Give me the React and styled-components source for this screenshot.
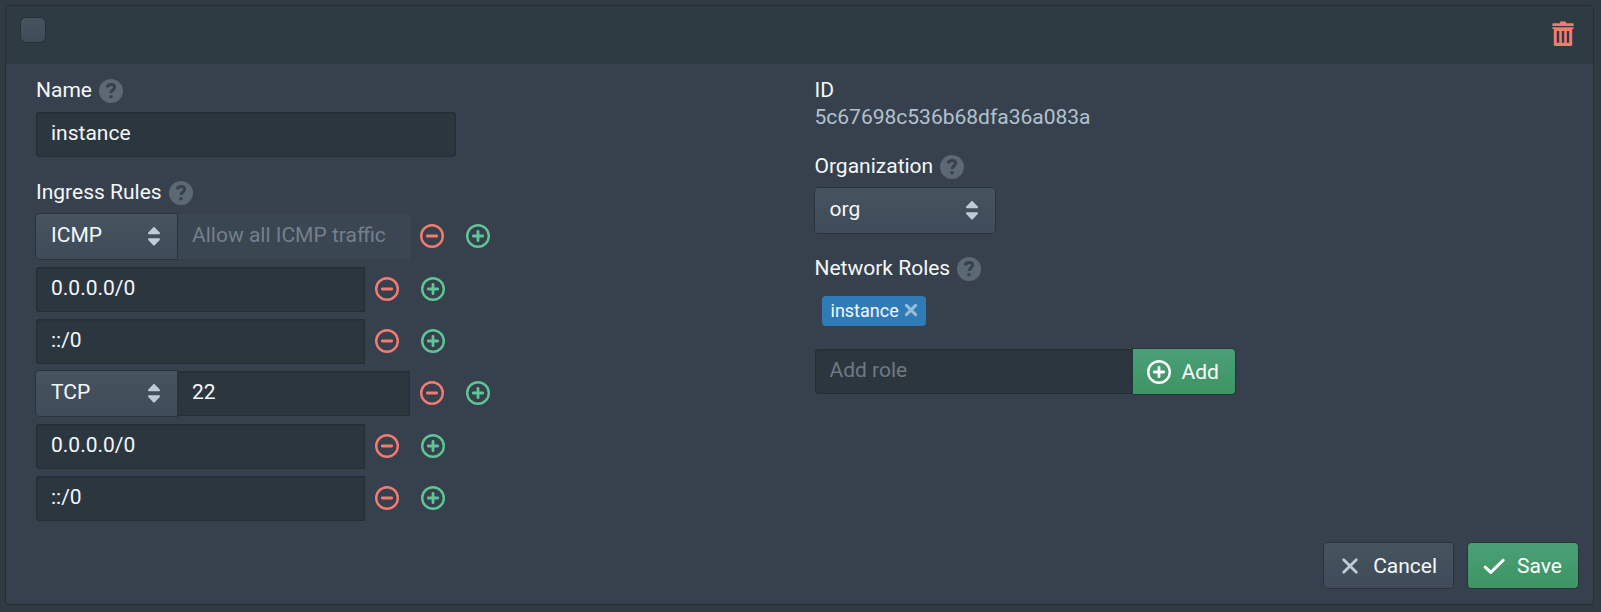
import React, { useState } from "react";
import styled, { createGlobalStyle, css } from "styled-components";

const GlobalStyle = createGlobalStyle`
  * {
    box-sizing: border-box;
  }

  body {
    margin: 0;
    padding: 6px 8px 6px 6px;
    background: #303a43;
    color: #f5f8fa;
    font-family: Roboto, "Noto Sans", sans-serif;
    font-size: 21px;
    line-height: 27px;
  }

  button,
  input,
  select {
    margin: 0;
    font-family: inherit;
    font-size: inherit;
  }
`;

const Card = styled.form`
  border-radius: 4px;
  background: #36414d;
  box-shadow: 0 0 0 1px #262f36, 0 1px 1px #262f36;
  overflow: hidden;
`;

const CardHeader = styled.header`
  display: flex;
  justify-content: space-between;
  align-items: flex-start;
  height: 58px;
  padding: 12px 15px;
  background: #2f3b43;
`;

const Checkbox = styled.input`
  appearance: none;
  width: 24px;
  height: 24px;
  border-radius: 5px;
  background: linear-gradient(#46545e, #3f4b59);
  box-shadow: 0 0 0 1px #263138;
  cursor: pointer;

  &:checked {
    background: #137cbd;
  }
`;

const IconButton = styled.button`
  display: flex;
  justify-content: center;
  align-items: center;
  width: ${({ $width }) => $width || "44px"};
  height: ${({ $height }) => $height || "43px"};
  padding: 0;
  border: none;
  background: transparent;
  color: ${({ $color }) => $color};
  cursor: pointer;
`;

const CardBody = styled.div`
  display: grid;
  grid-template-columns: 1fr 1fr;
  padding: 13px 15px 0;
`;

const Column = styled.div`
  padding: 0 15px;
`;

const Field = styled.div`
  margin-bottom: 22px;
`;

const LabelRow = styled.div`
  display: flex;
  align-items: center;
  gap: 7px;
  margin-bottom: 8px;
`;

const HelpButton = styled.button`
  display: flex;
  padding: 0;
  border: none;
  background: transparent;
  color: #5c6873;
  cursor: help;
`;

const Value = styled.div`
  color: #b5c1ce;
`;

const TextInput = styled.input`
  width: ${({ $width }) => $width};
  height: 45px;
  padding: 0 14px 3px 15px;
  border: none;
  outline: none;
  border-radius: ${({ $radius }) => $radius || "4px"};
  background: #2c363f;
  box-shadow: inset 0 0 0 1px #252e35, inset 0 1px 2px #222b31;
  color: #f5f8fa;

  &::placeholder {
    color: #6d7983;
    opacity: 1;
  }

  &:disabled {
    background: #3a4651;
    box-shadow: none;
  }

  &:disabled::placeholder {
    color: #74808b;
  }
`;

const raised = css`
  background: linear-gradient(#46545e, #3f4b59);
  box-shadow: 0 0 0 1px #29333b;
`;

const SelectWrap = styled.div`
  position: relative;
  width: ${({ $width }) => $width};

  svg {
    position: absolute;
    top: 11px;
    right: 11px;
    pointer-events: none;
  }
`;

const Select = styled.select`
  ${raised}
  appearance: none;
  display: block;
  width: 100%;
  height: 45px;
  padding: 0 38px 3px 15px;
  border: none;
  border-radius: ${({ $radius }) => $radius || "4px"};
  color: #f5f8fa;
  cursor: pointer;
`;

const RuleRow = styled.div`
  display: flex;
  margin-bottom: 8px;
`;

const AddressRow = styled.div`
  display: flex;
  margin-bottom: 7px;
`;

const RowActions = styled.div`
  display: flex;
  gap: 2px;
`;

const Tags = styled.div`
  display: flex;
  padding: 6px 7px 1px;
`;

const Tag = styled.span`
  display: inline-flex;
  align-items: center;
  gap: 5px;
  height: 30px;
  padding: 0 8px 2px 9px;
  border-radius: 4px;
  background: #2f7bb8;
  font-size: 18px;
`;

const InputGroup = styled.div`
  display: flex;
`;

const Button = styled.button`
  ${raised}
  display: inline-flex;
  align-items: center;
  gap: 11px;
  height: 45px;
  padding: 0 16px 0 14px;
  border: none;
  border-radius: ${({ $radius }) => $radius || "4px"};
  color: #f5f8fa;
  cursor: pointer;

  svg {
    color: #bfccd6;
  }

  ${({ $success }) =>
    $success &&
    css`
      background: linear-gradient(#4a9f77, #3f9463);
      color: #ffffff;

      svg {
        color: #ffffff;
      }
    `}
`;

const CardFooter = styled.footer`
  display: flex;
  justify-content: flex-end;
  gap: 15px;
  padding: 15px 15px 16px;
`;

const CircleIcon = ({ plus }) => (
  <svg width="24" height="24" viewBox="0 0 24 24" fill="none" stroke="currentColor" aria-hidden="true">
    <circle cx="12" cy="12" r="10.8" strokeWidth="2.4" />
    <path d={plus ? "M7.3 12h9.4M12 7.3v9.4" : "M7.3 12h9.4"} strokeWidth="2.8" strokeLinecap="round" />
  </svg>
);

const HelpIcon = () => (
  <svg width="24" height="24" viewBox="0 0 24 24" fill="none" aria-hidden="true">
    <circle cx="12" cy="12" r="12" fill="currentColor" />
    <path
      d="M8.2 8.4C8.6 6.3 10 5.4 12.1 5.4c2.200 0 3.500 1.100 3.500 2.800 0 2.700-3.500 2.900-3.500 5.700"
      stroke="#36414d"
      strokeWidth="3"
    />
    <rect x="10.4" y="16.2" width="3.2" height="3" rx="0.6" fill="#36414d" />
  </svg>
);

const TrashIcon = () => (
  <svg width="22" height="26" viewBox="0 0 22 26" aria-hidden="true">
    <path
      fill="currentColor"
      d="M8 2.2V1.5C8 .8 8.5.5 9 .5h4c.5 0 1 .3 1 1v.7h7c.4 0 .6.2.6.6v2.3H.4V2.8c0-.4.2-.6.6-.6z"
    />
    <path
      fill="currentColor"
      fillRule="evenodd"
      d="M.4 6.3h21.2v1.800H20.2v15.500c0 .9-.5 1.400-1.300 1.400H3.100c-.8 0-1.300-.5-1.300-1.400V8.100H.4zM4.800 10v11.800h2.400V10zM9.800 10v11.800h2.400V10zM14.800 10v11.800h2.400V10z"
    />
  </svg>
);

const DoubleCaret = () => (
  <svg width="24" height="22" viewBox="0 0 24 22" fill="#bfccd6" aria-hidden="true">
    <path d="M12 2c.3 0 .6.1.8.4l4.900 5.200c.7.8.300 1.700-.7 1.700H7c-1 0-1.400-.9-.7-1.700l4.900-5.200c.2-.3.500-.4.800-.4z" />
    <path d="M12 20.600c.3 0 .6-.1.8-.4l4.900-5.200c.7-.8.300-1.700-.7-1.700H7c-1 0-1.400.9-.7 1.700l4.900 5.200c.2.3.500.4.800.4z" />
  </svg>
);

const CrossIcon = ({ size = 24, width = 2.8, inset = 5.7 }) => (
  <svg width={size} height={size} viewBox={`0 0 ${size} ${size}`} stroke="currentColor" aria-hidden="true">
    <path
      d={`M${inset} ${inset}L${size - inset} ${size - inset}M${size - inset} ${inset}L${inset} ${size - inset}`}
      strokeWidth={width}
      strokeLinecap="round"
    />
  </svg>
);

const TickIcon = () => (
  <svg width="24" height="24" viewBox="0 0 24 24" fill="none" stroke="currentColor" aria-hidden="true">
    <path d="M3.200 13.200l5.600 5.200L21.200 6.200" strokeWidth="3" strokeLinecap="round" strokeLinejoin="round" />
  </svg>
);

const Label = ({ htmlFor, children, topic }) => (
  <LabelRow>
    <label htmlFor={htmlFor}>{children}</label>
    <HelpButton type="button" aria-label={`Help: ${topic}`}>
      <HelpIcon />
    </HelpButton>
  </LabelRow>
);

const AddRemove = () => (
  <RowActions>
    <IconButton type="button" $color="#f57b72" aria-label="Remove">
      <CircleIcon />
    </IconButton>
    <IconButton type="button" $color="#5fc596" aria-label="Insert">
      <CircleIcon plus />
    </IconButton>
  </RowActions>
);

const initialRules = [
  { protocol: "icmp", port: "", sources: ["0.0.0.0/0", "::/0"] },
  { protocol: "tcp", port: "22", sources: ["0.0.0.0/0", "::/0"] },
];

const Rule = ({ rule, index }) => {
  const [protocol, setProtocol] = useState(rule.protocol);
  const icmp = protocol === "icmp";

  return (
    <>
      <RuleRow>
        <SelectWrap $width="141px">
          <Select
            id={`protocol-${index}`}
            aria-label="Protocol"
            $radius="4px 0 0 4px"
            value={protocol}
            onChange={(e) => setProtocol(e.target.value)}>
            <option value="icmp">ICMP</option>
            <option value="tcp">TCP</option>
            <option value="udp">UDP</option>
          </Select>
          <DoubleCaret />
        </SelectWrap>
        <TextInput
          type="text"
          aria-label="Port"
          $width="233px"
          $radius="0"
          disabled={icmp}
          placeholder={icmp ? "Allow all ICMP traffic" : ""}
          defaultValue={rule.port}
        />
        <AddRemove />
      </RuleRow>
      {rule.sources.map((source) => (
        <AddressRow key={source}>
          <TextInput
            type="text"
            aria-label="Source address"
            $width="329px"
            $radius="4px 0 0 4px"
            defaultValue={source}
          />
          <AddRemove />
        </AddressRow>
      ))}
    </>
  );
};

const App = () => {
  const [name, setName] = useState("instance");
  const [roles, setRoles] = useState(["instance"]);
  const [role, setRole] = useState("");

  const addRole = () => {
    if (role && !roles.includes(role)) {
      setRoles([...roles, role]);
    }
    setRole("");
  };

  return (
    <>
      <GlobalStyle />
      <Card onSubmit={(e) => e.preventDefault()}>
        <CardHeader>
          <Checkbox type="checkbox" aria-label="Select firewall" />
          <IconButton type="button" $width="30px" $height="32px" $color="#f57b72" aria-label="Delete">
            <TrashIcon />
          </IconButton>
        </CardHeader>
        <CardBody>
          <Column>
            <Field>
              <Label htmlFor="name" topic="name">Name</Label>
              <TextInput
                id="name"
                type="text"
                $width="420px"
                value={name}
                onChange={(e) => setName(e.target.value)}
              />
            </Field>
            <Label htmlFor="protocol-0" topic="ingress rules">Ingress Rules</Label>
            {initialRules.map((rule, index) => (
              <Rule key={rule.protocol} rule={rule} index={index} />
            ))}
          </Column>
          <Column>
            <Field>
              <div>ID</div>
              <Value>5c67698c536b68dfa36a083a</Value>
            </Field>
            <Field>
              <Label htmlFor="organization" topic="organization">Organization</Label>
              <SelectWrap $width="180px">
                <Select id="organization">
                  <option>org</option>
                </Select>
                <DoubleCaret />
              </SelectWrap>
            </Field>
            <Field>
              <Label htmlFor="role" topic="network roles">Network Roles</Label>
              <Tags>
                {roles.map((item) => (
                  <Tag key={item}>
                    {item}
                    <IconButton
                      type="button"
                      $width="14px"
                      $height="24px"
                      $color="#97bddb"
                      aria-label={`Remove ${item}`}
                      onClick={() => setRoles(roles.filter((r) => r !== item))}>
                      <CrossIcon size={14} width={3} inset={2.4} />
                    </IconButton>
                  </Tag>
                ))}
              </Tags>
            </Field>
            <InputGroup>
              <TextInput
                id="role"
                type="text"
                $width="318px"
                $radius="4px 0 0 4px"
                placeholder="Add role"
                value={role}
                onChange={(e) => setRole(e.target.value)}
              />
              <Button type="button" $success $radius="0 4px 4px 0" onClick={addRole}>
                <CircleIcon plus />
                Add
              </Button>
            </InputGroup>
          </Column>
        </CardBody>
        <CardFooter>
          <Button type="button">
            <CrossIcon />
            Cancel
          </Button>
          <Button type="submit" $success>
            <TickIcon />
            Save
          </Button>
        </CardFooter>
      </Card>
    </>
  );
};

export default App;
